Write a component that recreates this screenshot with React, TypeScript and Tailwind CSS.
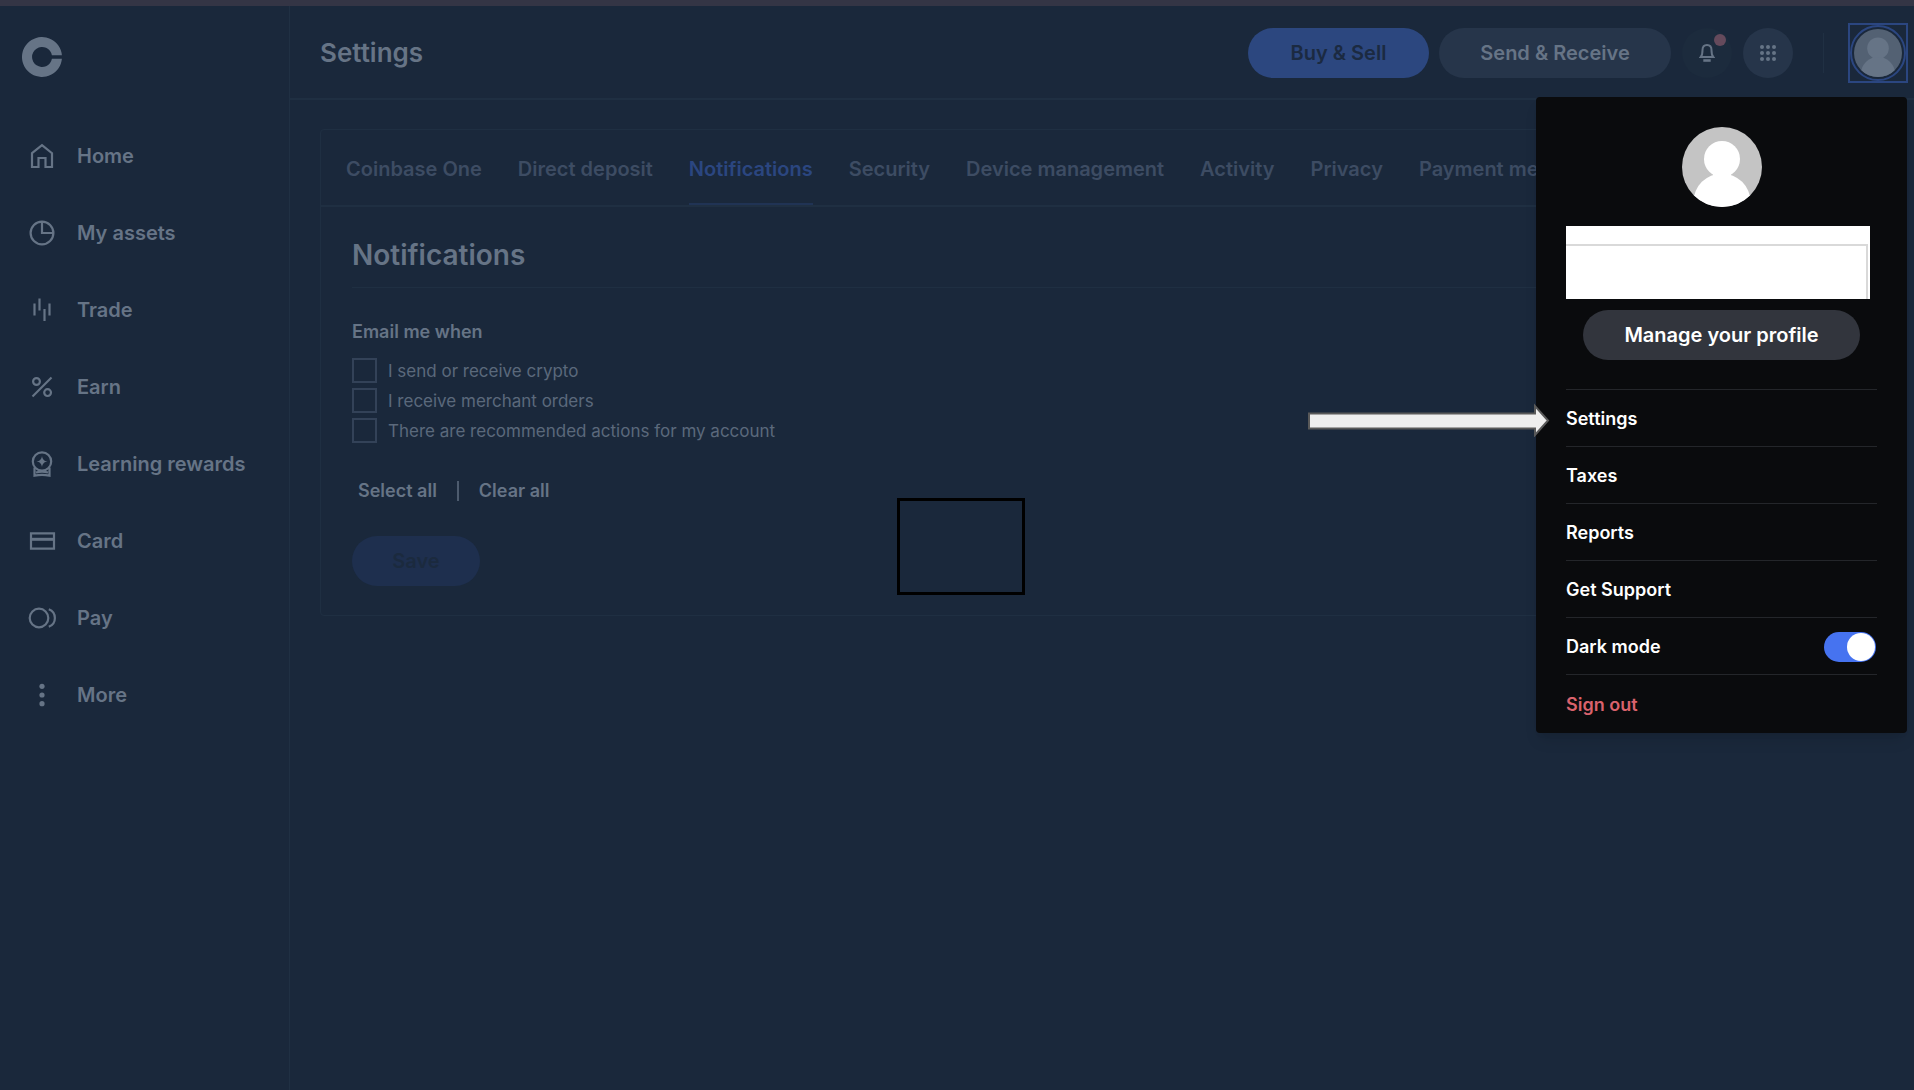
import React, { useState } from 'react';

interface NavItem {
  label: string;
  icon: React.ReactNode;
}

const navItems: NavItem[] = [
  {
    label: 'Home',
    icon: <path d="M4 11.2 14 3.2l10 8V25h-6.500v-9h-7v9H4z" />,
  },
  {
    label: 'My assets',
    icon: (
      <>
        <circle cx="14" cy="14" r="11.4" />
        <path d="M14 2.6V14h11.4" />
      </>
    ),
  },
  {
    label: 'Trade',
    icon: <path d="M6.5 7.5v12M11.5 2.5v12M16.5 13v12M21.5 7.5v12" />,
  },
  {
    label: 'Earn',
    icon: (
      <>
        <path d="M4.5 23.5 23.5 4.5" />
        <circle cx="8.5" cy="8.5" r="3.4" />
        <circle cx="19.6" cy="19.6" r="3.4" />
      </>
    ),
  },
  {
    label: 'Learning rewards',
    icon: (
      <>
        <circle cx="14" cy="11.5" r="9.2" />
        <path d="M6.500 17.500v8.200c5-1 10-1 15 0v-8.200M8 22.500c4-1.200 8-1.200 12 0" />
        <path
          d="M14 6c.6 3.500 2 4.900 5.500 5.500-3.500.6-4.900 2-5.500 5.500-.6-3.500-2-4.900-5.500-5.500 3.500-.6 4.900-2 5.500-5.500z"
          fill="currentColor"
          stroke="none"
        />
      </>
    ),
  },
  {
    label: 'Card',
    icon: (
      <>
        <path d="M3 6.300h23v15.400H3z" />
        <path d="M3 12.300h23" strokeWidth="3" />
      </>
    ),
  },
  {
    label: 'Pay',
    icon: (
      <>
        <circle cx="11" cy="14" r="9.300" />
        <path d="M20.800 5.200a9.400 9.400 0 0 1 0 17.600" />
      </>
    ),
  },
  {
    label: 'More',
    icon: (
      <g fill="currentColor" stroke="none">
        <circle cx="14" cy="5.300" r="2.600" />
        <circle cx="14" cy="14" r="2.600" />
        <circle cx="14" cy="22.700" r="2.600" />
      </g>
    ),
  },
];

const tabs = [
  'Coinbase One',
  'Direct deposit',
  'Notifications',
  'Security',
  'Device management',
  'Activity',
  'Privacy',
  'Payment methods',
];

const emailOptions = [
  'I send or receive crypto',
  'I receive merchant orders',
  'There are recommended actions for my account',
];

const menuLinks = ['Settings', 'Taxes', 'Reports', 'Get Support'];

const Logo: React.FC = () => (
  <svg viewBox="0 0 40 40" className="size-10" fill="currentColor">
    <path d="M39.900 18.300A20 20 0 1 0 39.900 21.700H29.900A10 10 0 1 1 29.900 18.300z" />
  </svg>
);

const Avatar: React.FC<{ back: string; front: string; className: string }> = ({ back, front, className }) => (
  <svg viewBox="0 0 80 80" className={`rounded-full ${className}`}>
    <rect width="80" height="80" fill={back} />
    <circle cx="40" cy="32" r="18" fill={front} />
    <path d="M31 46h18v6H31z" fill={front} />
    <circle cx="40" cy="75" r="28.500" fill={front} />
  </svg>
);

const Sidebar: React.FC = () => (
  <aside className="flex w-[290px] shrink-0 flex-col border-r border-[#203043] pt-[31px]">
    <a href="#" aria-label="Coinbase" className="ml-[22px] w-10">
      <Logo />
    </a>
    <nav className="mt-10 flex flex-col">
      {navItems.map((item) => (
        <a key={item.label} href="#" className="flex h-[77px] items-center gap-[21px] pl-7 text-xl font-semibold">
          <svg viewBox="0 0 28 28" className="size-7" fill="none" stroke="currentColor" strokeWidth="2.200">
            {item.icon}
          </svg>
          {item.label}
        </a>
      ))}
    </nav>
  </aside>
);

const Header: React.FC = () => (
  <header className="flex h-[94px] shrink-0 items-center border-b-2 border-[#1f2f42] pt-px pr-[6px] pl-[30px]">
    <h1 className="text-[26px] font-semibold">Settings</h1>
    <div className="ml-auto flex items-center">
      <button className="h-[50px] w-[181px] rounded-full bg-[#2c477f] text-xl font-semibold text-[#1b2a41]">
        Buy &amp; Sell
      </button>
      <button className="ml-[10px] h-[50px] w-[232px] rounded-full bg-[#26354a] text-xl font-semibold">
        Send &amp; Receive
      </button>
      <button
        aria-label="Alerts"
        className="relative ml-[11px] flex size-[50px] items-center justify-center rounded-full bg-[#1c2b3d]"
      >
        <svg viewBox="0 0 16 20" className="h-5 w-4" fill="none" stroke="currentColor" strokeWidth="2">
          <path d="M1.800 14c1.500-1.800 1.700-3.500 1.700-7C3.500 3.800 5.200 2 8 2s4.500 1.800 4.500 5c0 3.500.2 5.200 1.700 7z" />
          <path d="M4.300 17.500h7.400" strokeWidth="2.600" />
        </svg>
        <span className="absolute top-[6px] right-[6px] size-3 rounded-full bg-[#654a5c]" />
      </button>
      <button
        aria-label="Apps"
        className="ml-[11px] flex size-[50px] items-center justify-center rounded-full bg-[#26354a]"
      >
        <svg viewBox="0 0 16 16" className="size-4" fill="currentColor">
          {[2, 8, 14].map((y) => [2, 8, 14].map((x) => <circle key={`${x}-${y}`} cx={x} cy={y} r="2" />))}
        </svg>
      </button>
      <span className="ml-[30px] h-10 w-px bg-[#203043]" />
      <button
        aria-label="Profile"
        className="ml-6 flex size-[60px] items-center justify-center border-2 border-[#2b4680]"
      >
        <span className="rounded-full border-2 border-[#2b4680] p-[2px]">
          <Avatar back="#536173" front="#667486" className="size-12" />
        </span>
      </button>
    </div>
  </header>
);

const NotificationSettings: React.FC = () => {
  const [checked, setChecked] = useState<string[]>([]);

  const toggle = (option: string) =>
    setChecked((prev) => (prev.includes(option) ? prev.filter((o) => o !== option) : [...prev, option]));

  return (
    <section className="mx-[30px] mt-[29px] overflow-hidden rounded border border-[#1f2f42]">
      <nav className="flex h-[77px] gap-9 border-b-2 border-[#1f2f42] pl-[25px]">
        {tabs.map((tab) => (
          <a
            key={tab}
            href="#"
            className={`flex items-center border-b-2 pt-1 text-xl font-semibold whitespace-nowrap ${
              tab === 'Notifications' ? 'border-[#203354] text-[#2b4680]' : 'border-transparent text-[#3d4c63]'
            }`}
          >
            {tab}
          </a>
        ))}
      </nav>
      <div className="px-[31px] pb-[29px]">
        <h2 className="border-b border-[#1f2f42] pt-[30px] pb-[14px] text-[28px] leading-9 font-semibold">
          Notifications
        </h2>
        <h3 className="mt-8 text-lg leading-6 font-semibold">Email me when</h3>
        <div className="mt-[14px] flex flex-col gap-[5px]">
          {emailOptions.map((option) => (
            <label key={option} className="flex h-[25px] items-center gap-[11px] text-[17px] text-[#5b697b]">
              <input
                type="checkbox"
                checked={checked.includes(option)}
                onChange={() => toggle(option)}
                className="size-[25px] appearance-none border-2 border-[#334258] checked:bg-[#2c477f]"
              />
              <span className="pt-[3px]">{option}</span>
            </label>
          ))}
        </div>
        <div className="mt-9 flex items-center gap-5 pl-[6px] text-lg leading-6 font-semibold">
          <button onClick={() => setChecked(emailOptions)}>Select all</button>
          <span className="h-5 w-[2px] bg-[#4d5b6e]" />
          <button onClick={() => setChecked([])}>Clear all</button>
        </div>
        <button className="mt-[33px] h-[50px] w-32 rounded-full bg-[#1e2f4e] text-xl font-semibold text-[#1b2a3e]">
          Save
        </button>
      </div>
    </section>
  );
};

const ProfileMenu: React.FC = () => {
  const [darkMode, setDarkMode] = useState(true);

  return (
    <div className="absolute top-[97px] right-[7px] flex w-[371px] flex-col rounded bg-[#0a0b0d] px-[30px] pt-[30px] text-white shadow-lg shadow-black/10">
      <Avatar back="#c4c4c4" front="#ffffff" className="size-20 self-center" />
      <div className="mt-[19px] mr-[7px] h-[73px] bg-white pt-[18px] pr-[2px]">
        <div className="h-full border-t-2 border-r-2 border-[#d9d9d9]" />
      </div>
      <button className="mx-[17px] mt-[11px] h-[50px] rounded-full bg-[#32353d] text-xl font-semibold">
        Manage your profile
      </button>
      <ul className="mt-[29px] text-lg font-semibold">
        {menuLinks.map((link) => (
          <li key={link} className="border-t border-[#24262a]">
            <a href="#" className="flex h-14 items-center pt-[2px]">
              {link}
            </a>
          </li>
        ))}
        <li className="border-t border-[#24262a]">
          <label className="flex h-14 items-center justify-between pt-[2px] pr-px">
            Dark mode
            <input
              type="checkbox"
              checked={darkMode}
              onChange={() => setDarkMode(!darkMode)}
              className="flex h-[30px] w-[52px] appearance-none items-center rounded-full bg-[#32353d] px-px before:size-7 before:rounded-full before:bg-white checked:justify-end checked:bg-[#4673f0]"
            />
          </label>
        </li>
        <li className="border-t border-[#24262a]">
          <button className="flex h-[58px] items-center pt-[2px] text-[#d9626c]">Sign out</button>
        </li>
      </ul>
    </div>
  );
};

const App: React.FC = () => (
  <div className="relative flex min-h-screen flex-col overflow-hidden bg-[#1a283b] font-['Inter','Liberation_Sans',sans-serif] text-[#667486]">
    <div className="h-[6px] bg-[#343545]" />
    <div className="flex grow">
      <Sidebar />
      <main className="flex min-w-0 grow flex-col">
        <Header />
        <NotificationSettings />
      </main>
    </div>
    <div className="absolute top-[498px] left-[897px] h-[97px] w-[128px] border-[3px] border-black" />
    <ProfileMenu />
    <svg
      viewBox="0 0 244 34"
      className="absolute top-[403px] right-[363px] h-[34px] w-[244px]"
      fill="#eeeeee"
      stroke="#595959"
      strokeWidth="2"
    >
      <path d="M2 10.500h226V3l13 14.500L228 32v-6.500H2z" />
    </svg>
  </div>
);

export default App;
